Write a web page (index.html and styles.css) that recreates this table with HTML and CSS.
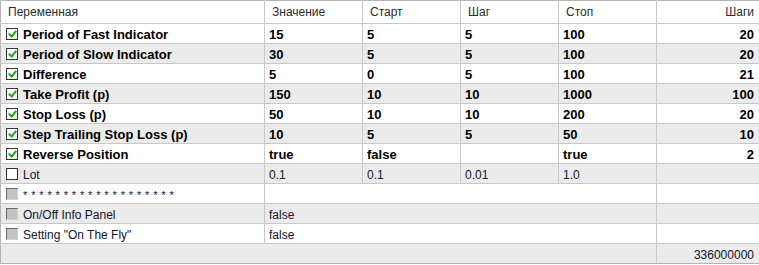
FILE: index.html
```html
<!DOCTYPE html>
<html>
<head>
<meta charset="utf-8">
<link rel="stylesheet" href="styles.css">
</head>
<body>
<table class="grid">
  <colgroup>
    <col class="c-name"><col class="c-v"><col class="c-v"><col class="c-v"><col class="c-v"><col class="c-steps">
  </colgroup>
  <thead>
    <tr><th>Переменная</th><th>Значение</th><th>Старт</th><th>Шаг</th><th>Стоп</th><th class="r">Шаги</th></tr>
  </thead>
  <tbody>
    <tr class="b"><td><span class="cb on"></span>Period of Fast Indicator</td><td>15</td><td>5</td><td>5</td><td>100</td><td class="r">20</td></tr>
    <tr class="b alt"><td><span class="cb on"></span>Period of Slow Indicator</td><td>30</td><td>5</td><td>5</td><td>100</td><td class="r">20</td></tr>
    <tr class="b"><td><span class="cb on"></span>Difference</td><td>5</td><td>0</td><td>5</td><td>100</td><td class="r">21</td></tr>
    <tr class="b alt"><td><span class="cb on"></span>Take Profit (p)</td><td>150</td><td>10</td><td>10</td><td>1000</td><td class="r">100</td></tr>
    <tr class="b"><td><span class="cb on"></span>Stop Loss (p)</td><td>50</td><td>10</td><td>10</td><td>200</td><td class="r">20</td></tr>
    <tr class="b alt"><td><span class="cb on"></span>Step Trailing Stop Loss (p)</td><td>10</td><td>5</td><td>5</td><td>50</td><td class="r">10</td></tr>
    <tr class="b"><td><span class="cb on"></span>Reverse Position</td><td>true</td><td>false</td><td></td><td>true</td><td class="r">2</td></tr>
    <tr class="alt"><td><span class="cb"></span>Lot</td><td>0.1</td><td>0.1</td><td>0.01</td><td>1.0</td><td class="r"></td></tr>
    <tr><td><span class="cb dis"></span><span class="stars">* * * * * * * * * * * * * * * * * * *</span></td><td colspan="4"></td><td class="r"></td></tr>
    <tr class="alt"><td><span class="cb dis"></span>On/Off Info Panel</td><td colspan="4">false</td><td class="r"></td></tr>
    <tr><td><span class="cb dis"></span>Setting "On The Fly"</td><td colspan="4">false</td><td class="r"></td></tr>
    <tr class="alt foot"><td colspan="5"></td><td class="r">336000000</td></tr>
  </tbody>
</table>
</body>
</html>
```
FILE: styles.css
```css
html, body {
  margin: 0;
  padding: 0;
  background: #ffffff;
}
.grid {
  border-collapse: collapse;
  table-layout: fixed;
  width: 759px;
  font-family: "Liberation Sans", Arial, sans-serif;
  font-size: 12px;
  line-height: 18px;
  color: #14142a;
}
.c-name { width: 264px; }
.c-v { width: 98px; }
.c-steps { width: 103px; }
.grid th, .grid td {
  border: 1px solid #c8c8c8;
  padding: 0 6px 0 4px;
  white-space: nowrap;
  overflow: hidden;
}
.grid th {
  height: 22px;
  font-weight: normal;
  text-align: left;
  color: #2c2c2c;
  padding-left: 7px;
  background: #ffffff;
  border-top-color: #b4b4b4;
}
.grid td {
  height: 20px;
  padding-top: 2px;
  padding-bottom: 0;
  box-sizing: border-box;
  line-height: 16px;
}
.grid .b td {
  padding-top: 1px;
  line-height: 17px;
}
.grid tbody td:first-child {
  padding-left: 5px;
  border-left-color: #b4b4b4;
}
.grid th:first-child { border-left-color: #b4b4b4; }
.grid th:last-child, .grid td:last-child { border-right-color: #b4b4b4; }
.grid .foot td { border-bottom-color: #b4b4b4; }
.grid th.r, .grid td.r {
  text-align: right;
  padding-right: 5px;
}
.alt td { background: #ebebeb; }
.b td {
  font-weight: bold;
  font-size: 13px;
  color: #000000;
}
.cb {
  display: inline-block;
  width: 10px;
  height: 10px;
  border: 1px solid #333333;
  background: #ffffff;
  vertical-align: -1px;
  margin-right: 5px;
  position: relative;
}
.cb.on::after {
  content: "";
  position: absolute;
  left: 3px;
  top: 0px;
  width: 3px;
  height: 6px;
  border: solid #1aa81a;
  border-width: 0 2px 2px 0;
  transform: rotate(40deg);
}
.cb.dis {
  background: #c4c4c4;
  border-color: #6a6a6a #d0d0d0 #d0d0d0 #6a6a6a;
}
.stars {
  font-size: 11px;
  letter-spacing: 0.4px;
}
```
